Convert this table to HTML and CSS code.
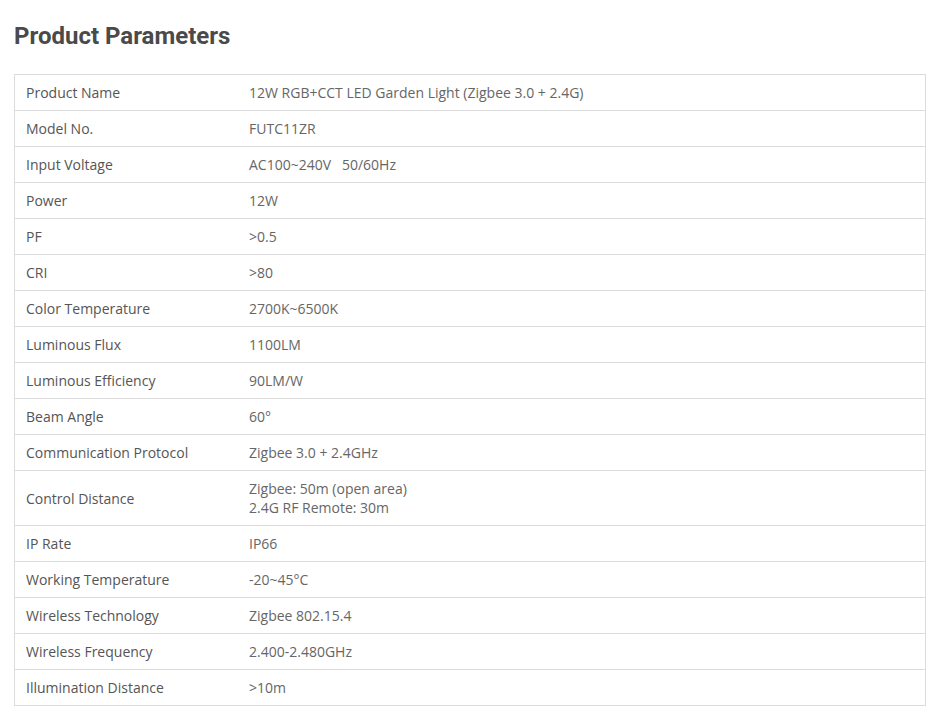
FILE: index.html
```html
<!DOCTYPE html>
<html>
<head>
<meta charset="utf-8">
<link rel="stylesheet" href="styles.css">
</head>
<body>
<div class="page">
  <h2 class="title">Product Parameters</h2>
  <table class="params">
    <tr><td class="k">Product Name</td><td class="v">12W RGB+CCT LED Garden Light (Zigbee 3.0 + 2.4G)</td></tr>
    <tr><td class="k">Model No.</td><td class="v">FUTC11ZR</td></tr>
    <tr><td class="k">Input Voltage</td><td class="v">AC100~240V&nbsp;&nbsp; 50/60Hz</td></tr>
    <tr><td class="k">Power</td><td class="v">12W</td></tr>
    <tr><td class="k">PF</td><td class="v">&gt;0.5</td></tr>
    <tr><td class="k">CRI</td><td class="v">&gt;80</td></tr>
    <tr><td class="k">Color Temperature</td><td class="v">2700K~6500K</td></tr>
    <tr><td class="k">Luminous Flux</td><td class="v">1100LM</td></tr>
    <tr><td class="k">Luminous Efficiency</td><td class="v">90LM/W</td></tr>
    <tr><td class="k">Beam Angle</td><td class="v">60°</td></tr>
    <tr><td class="k">Communication Protocol</td><td class="v">Zigbee 3.0 + 2.4GHz</td></tr>
    <tr><td class="k">Control Distance</td><td class="v">Zigbee: 50m (open area)<br>2.4G RF Remote: 30m</td></tr>
    <tr><td class="k">IP Rate</td><td class="v">IP66</td></tr>
    <tr><td class="k">Working Temperature</td><td class="v">-20~45°C</td></tr>
    <tr><td class="k">Wireless Technology</td><td class="v">Zigbee 802.15.4</td></tr>
    <tr><td class="k">Wireless Frequency</td><td class="v">2.400-2.480GHz</td></tr>
    <tr><td class="k">Illumination Distance</td><td class="v">&gt;10m</td></tr>
  </table>
</div>
</body>
</html>
```
FILE: styles.css
```css
html, body {
  margin: 0;
  padding: 0;
  background: #fff;
}
.page {
  padding: 20px 4px 0 14px;
}
.title {
  margin: 0 0 22px 0;
  font-family: Roboto, "Liberation Sans", sans-serif;
  font-weight: 700;
  font-size: 24px;
  line-height: 32px;
  color: #4a4a4a;
}
.params {
  width: 912px;
  border-collapse: collapse;
  border: 1px solid #dcdcdc;
  font-family: "Open Sans", "Liberation Sans", sans-serif;
  font-size: 14px;
  line-height: 19px;
}
.params td {
  border-top: 1px solid #dcdcdc;
  padding: 8px 11px 8px 11px;
  vertical-align: middle;
}
.params .k {
  width: 201px;
  color: #555;
}
.params .v {
  color: #666;
}
```
